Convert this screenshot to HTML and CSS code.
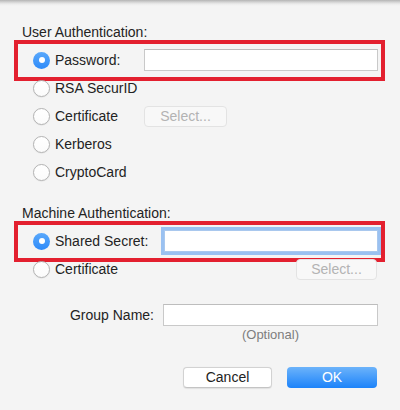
FILE: index.html
```html
<!DOCTYPE html>
<html>
<head>
<meta charset="utf-8">
<link rel="stylesheet" href="styles.css">
</head>
<body>
<div class="dialog">
  <div class="group-title">User Authentication:</div>
  <div class="options">
    <div class="row highlight">
      <span class="radio on"></span>
      <span class="label lbl-user">Password:</span>
      <span class="field"></span>
    </div>
    <div class="row">
      <span class="radio"></span>
      <span class="label">RSA SecurID</span>
    </div>
    <div class="row">
      <span class="radio"></span>
      <span class="label lbl-user">Certificate</span>
      <span class="btn disabled btn-select">Select...</span>
    </div>
    <div class="row">
      <span class="radio"></span>
      <span class="label">Kerberos</span>
    </div>
    <div class="row">
      <span class="radio"></span>
      <span class="label">CryptoCard</span>
    </div>
  </div>

  <div class="group-title machine">Machine Authentication:</div>
  <div class="options">
    <div class="row highlight">
      <span class="radio on"></span>
      <span class="label lbl-machine">Shared Secret:</span>
      <span class="field focused"></span>
    </div>
    <div class="row">
      <span class="radio"></span>
      <span class="label">Certificate</span>
      <span class="btn disabled btn-select push-right">Select...</span>
    </div>
  </div>

  <div class="group-row">
    <span class="group-label">Group Name:</span>
    <span class="field"></span>
  </div>
  <div class="hint">(Optional)</div>

  <div class="actions">
    <span class="btn btn-cancel">Cancel</span>
    <span class="btn btn-ok">OK</span>
  </div>
</div>
</body>
</html>
```

FILE: styles.css
```css
html, body {
  margin: 0;
  padding: 0;
}
body {
  width: 400px;
  height: 410px;
  background-color: #f4f4f4;
  background-image: linear-gradient(#b4b4b4 0px, #d2d2d2 2px, #ebebeb 4px, #f4f4f4 6px);
  background-repeat: no-repeat;
  background-size: 100% 7px;
  font-family: "Liberation Sans", Arial, sans-serif;
  font-size: 14px;
  color: #232323;
  overflow: hidden;
}
.dialog {
  padding: 24px 22px 0 22px;
}
.group-title {
  line-height: 17px;
  height: 17px;
}
.group-title.machine {
  margin-top: 19px;
}
.options {
  margin-top: 5px;
  display: flex;
  flex-direction: column;
}
.row {
  display: flex;
  align-items: center;
  height: 28px;
  padding-left: 12px;
  position: relative;
}
.row.highlight::after {
  content: "";
  position: absolute;
  left: -8px;
  right: -7px;
  top: -6px;
  bottom: -7px;
  border: 4px solid #e3202f;
  pointer-events: none;
}
.radio {
  width: 17px;
  height: 17px;
  box-sizing: border-box;
  border-radius: 50%;
  border: 1px solid #b3b3b3;
  background: linear-gradient(#ffffff, #fbfbfb);
  box-shadow: 0 0.5px 1px rgba(0,0,0,0.1);
  margin-left: -1px;
  margin-right: 5px;
  flex: none;
  display: flex;
  align-items: center;
  justify-content: center;
}
.radio.on {
  border: none;
  background: linear-gradient(#5aa8fb, #2d8af9);
  box-shadow: none;
}
.radio.on::before {
  content: "";
  width: 6px;
  height: 6px;
  border-radius: 50%;
  background: #fff;
}
.label {
  line-height: 17px;
  white-space: nowrap;
}
.lbl-user {
  width: 89px;
  flex: none;
}
.lbl-machine {
  width: 109px;
  flex: none;
}
.field {
  flex: 1;
  height: 22px;
  box-sizing: border-box;
  background: #fff;
  border: 1px solid #c9c9c9;
  border-top-color: #bdbdbd;
}
.field.focused {
  border-color: #a9c8ee;
  box-shadow: 0 0 0 3px #9ac1f1;
}
.btn {
  box-sizing: border-box;
  height: 21px;
  border-radius: 4px;
  display: flex;
  align-items: center;
  justify-content: center;
  line-height: 17px;
}
.btn.disabled {
  color: #b3b3b3;
  background: #f8f8f8;
  border: 1px solid #e3e3e3;
}
.btn-select {
  width: 83px;
}
.push-right {
  margin-left: auto;
  margin-right: 1px;
  width: 81px;
}
.group-row {
  display: flex;
  align-items: center;
  margin-top: 21px;
  height: 22px;
}
.group-label {
  width: 132px;
  margin-right: 9px;
  text-align: right;
  flex: none;
}
.hint {
  padding-left: 141px;
  text-align: center;
  font-size: 13px;
  line-height: 15px;
  color: #7d7d7d;
  margin-top: 1px;
}
.actions {
  display: flex;
  justify-content: flex-end;
  gap: 15px;
  margin-top: 25px;
  padding-right: 1px;
}
.btn-cancel {
  width: 89px;
  background: #fff;
  border: 1px solid #d2d2d2;
  border-bottom-color: #c4c4c4;
  box-shadow: 0 0.5px 1px rgba(0,0,0,0.08);
  color: #222;
}
.btn-ok {
  width: 90px;
  background: linear-gradient(#6cb3fa, #1c83fa);
  color: #fff;
}
```
